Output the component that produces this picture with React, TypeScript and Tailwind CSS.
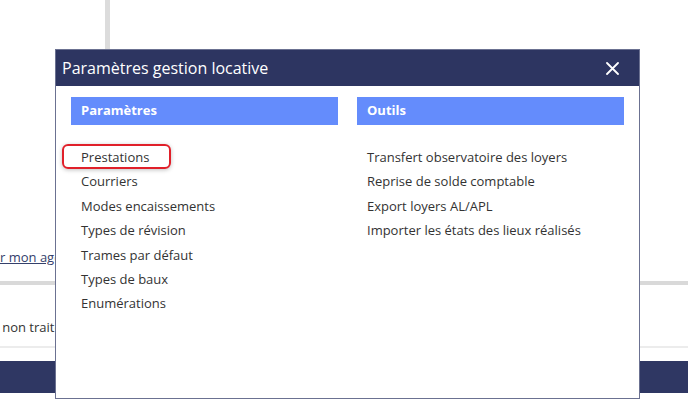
import React from "react"

const font = { fontFamily: '"Segoe UI", "Open Sans", "Noto Sans", sans-serif' }

const parametres = [
  "Prestations",
  "Courriers",
  "Modes encaissements",
  "Types de révision",
  "Trames par défaut",
  "Types de baux",
  "Enumérations",
]

const outils = [
  "Transfert observatoire des loyers",
  "Reprise de solde comptable",
  "Export loyers AL/APL",
  "Importer les états des lieux réalisés",
]

function Column({ title, items, highlight }: { title: string; items: string[]; highlight?: string }) {
  return (
    <div>
      <div className="flex h-[28px] items-center bg-[#648cfc] px-[10px] text-[13px] font-bold text-white">{title}</div>
      <ul className="mt-[20px]">
        {items.map((item) => (
          <li key={item} className="h-[24.4px] pl-[10px] text-[13px] leading-[24px] text-[#333]">
            <span className="relative">
              {item}
              {item === highlight && (
                <span className="absolute -left-[19px] top-[-4px] h-[25px] w-[109px] rounded-[6px] border-2 border-[#e0202a] shadow-[0_1px_4px_rgba(0,0,0,0.25)]" />
              )}
            </span>
          </li>
        ))}
      </ul>
    </div>
  )
}

export default function App() {
  return (
    <div className="relative h-[402px] w-[688px] overflow-hidden bg-white" style={font}>
      {/* page behind the dialog */}
      <div className="h-[49px]">
        <div className="ml-[105px] h-full w-[5px] bg-[#dcdcdc]" />
      </div>
      <div className="h-[200px]" />
      <div className="h-[17px] text-[13px] leading-[17px] whitespace-nowrap text-[#34406b] underline">r mon agenda</div>
      <div className="h-[15px]" />
      <div className="h-[4px] bg-[#d9d9d9]" />
      <div className="h-[34px]" />
      <div className="-ml-[9px] h-[17px] text-[13px] leading-[17px] whitespace-nowrap text-[#333]">o non traités</div>
      <div className="h-[10px]" />
      <div className="h-[2px] bg-[#ececec]" />
      <div className="h-[13px]" />
      <div className="h-[32px] bg-[#2f3763]" />

      {/* dialog */}
      <div className="absolute left-[55px] top-[49px] flex h-[350px] w-[585px] flex-col border border-[#6b7191] bg-white">
        <div className="flex h-[36px] items-center justify-between bg-[#2d3561] pl-[6px] pr-[20px] text-white">
          <span className="text-[16px]">Paramètres gestion locative</span>
          <svg width="13" height="13" viewBox="0 0 13 13" stroke="white" strokeWidth="1.8" strokeLinecap="round">
            <path d="M1 1L12 12M12 1L1 12" />
          </svg>
        </div>
        <div className="grid grid-cols-2 gap-[19px] px-[15px] pt-[11px]">
          <Column title="Paramètres" items={parametres} highlight="Prestations" />
          <Column title="Outils" items={outils} />
        </div>
      </div>
    </div>
  )
}
